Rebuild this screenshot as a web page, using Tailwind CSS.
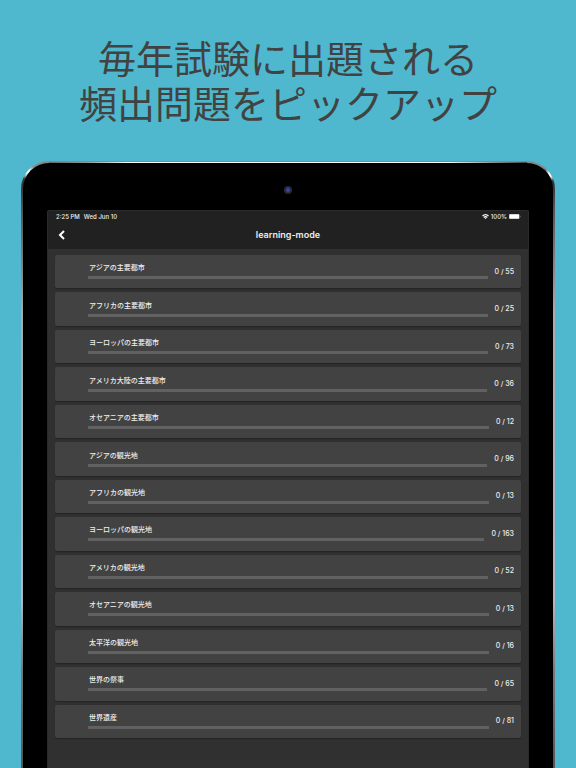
<!DOCTYPE html>
<html lang="ja">
<head>
    <meta charset="utf-8">
    <title>learning-mode</title>
    <script src="https://cdn.jsdelivr.net/npm/@tailwindcss/browser@4"></script>
</head>
<body class="flex flex-col h-screen overflow-hidden bg-[#4fb8ce] font-['Inter','Noto_Sans_CJK_JP',sans-serif]">
    <h1 class="pt-[37px] text-center text-[38px] leading-[45px] font-normal text-[#424242]">
        毎年試験に出題される<br>頻出問題をピックアップ
    </h1>

    <!-- Tablet: corner highlights, then side edges, then top edge -->
    <div class="flex flex-col flex-1 mt-[34px] mx-[21px] px-[2px] pt-[2px] rounded-t-[28px] bg-[radial-gradient(circle_at_6px_10px,#fff_2px,transparent_8px),radial-gradient(circle_at_calc(100%-4px)_13px,#fff_2px,transparent_7px),linear-gradient(to_bottom,transparent_6px,#333_20px,#555_50px,#aaa_150px,#b8b4c4_440px,#777_510px,#555)] bg-[#888]">
        <div class="flex flex-col flex-1 rounded-t-[26px] bg-black">
            <div class="h-px -mt-px mx-[26px] bg-[linear-gradient(to_right,#666,#999_40px,#fff_80px,#fff_calc(100%-80px),#888_calc(100%-30px),#444)]"></div>
            <div class="flex justify-center items-center h-[47px] pt-[7px]">
                <div class="size-2 rounded-full border-2 border-[#2b2b38] bg-[#3a46b0]"></div>
            </div>

            <!-- Screen -->
            <div class="flex-1 mx-6 rounded-t-[2px] border-x border-t border-[#2b2b2b] bg-[#303030] text-[#eee]">
                <header class="h-[38px] bg-[#212121]">
                    <div class="flex items-center justify-between h-[11px] pl-2 pr-[7px] text-[6px] leading-[8px] font-medium">
                        <div class="flex gap-[4px]"><span>2:25 PM</span><span>Wed Jun 10</span></div>
                        <div class="flex items-center gap-[2px]">
                            <svg class="w-[7px] h-[5px]" viewBox="0 0 14 10" fill="none" stroke="#fff" stroke-width="2.500">
                                <path d="M1 4a9 9 0 0 1 12 0M3.500 7a5 5 0 0 1 7 0"/>
                                <path d="M5 8a3 3 0 0 1 4 0L7 10z" fill="#fff" stroke="none"/>
                            </svg>
                            <span>100%</span>
                            <svg class="w-3 h-[5px]" viewBox="0 0 24 10">
                                <rect width="21" height="10" rx="2" fill="#aaa"/>
                                <rect x="1" y="1" width="19" height="8" rx="1" fill="#fff"/>
                                <path d="M22 3q2 2 0 4z" fill="#aaa"/>
                            </svg>
                        </div>
                    </div>
                    <div class="grid grid-cols-3 items-center h-[26px] px-2">
                        <button aria-label="Back" class="justify-self-start p-[2px]">
                            <svg class="w-[8px] h-[10px]" viewBox="0 0 8 10" fill="none" stroke="#fff" stroke-width="2">
                                <path d="M6 1L2 5l4 4"/>
                            </svg>
                        </button>
                        <h2 class="text-center text-[9px] leading-[12px] font-semibold">learning-mode</h2>
                    </div>
                </header>

                <ul id="modes" class="grid auto-rows-fr gap-1 min-h-[483px] mx-[7px] mt-[6px]"></ul>
            </div>
        </div>
    </div>

    <script>
        const modes = [
            ["アジアの主要都市", 55],
            ["アフリカの主要都市", 25],
            ["ヨーロッパの主要都市", 73],
            ["アメリカ大陸の主要都市", 36],
            ["オセアニアの主要都市", 12],
            ["アジアの観光地", 96],
            ["アフリカの観光地", 13],
            ["ヨーロッパの観光地", 163],
            ["アメリカの観光地", 52],
            ["オセアニアの観光地", 13],
            ["太平洋の観光地", 16],
            ["世界の祭事", 65],
            ["世界遺産", 81]
        ];

        document.getElementById("modes").innerHTML = modes.map(([name, total]) => `
            <li class="flex">
                <button class="flex flex-1 items-center gap-[7px] pl-[33px] pr-[7px] rounded-[2px] bg-[#424242] text-left shadow-[0_1px_1px_#0004]">
                    <span class="flex-1">
                        <span class="block h-[12px] pl-px text-[7px] leading-[8px] font-medium">${name}</span>
                        <span class="block h-[3px] bg-[#616161]" role="progressbar" aria-label="${name}" aria-valuenow="0" aria-valuemax="${total}"></span>
                    </span>
                    <span class="text-[7px] leading-[8px] font-medium">0 / ${total}</span>
                </button>
            </li>`).join("");
    </script>
</body>
</html>
